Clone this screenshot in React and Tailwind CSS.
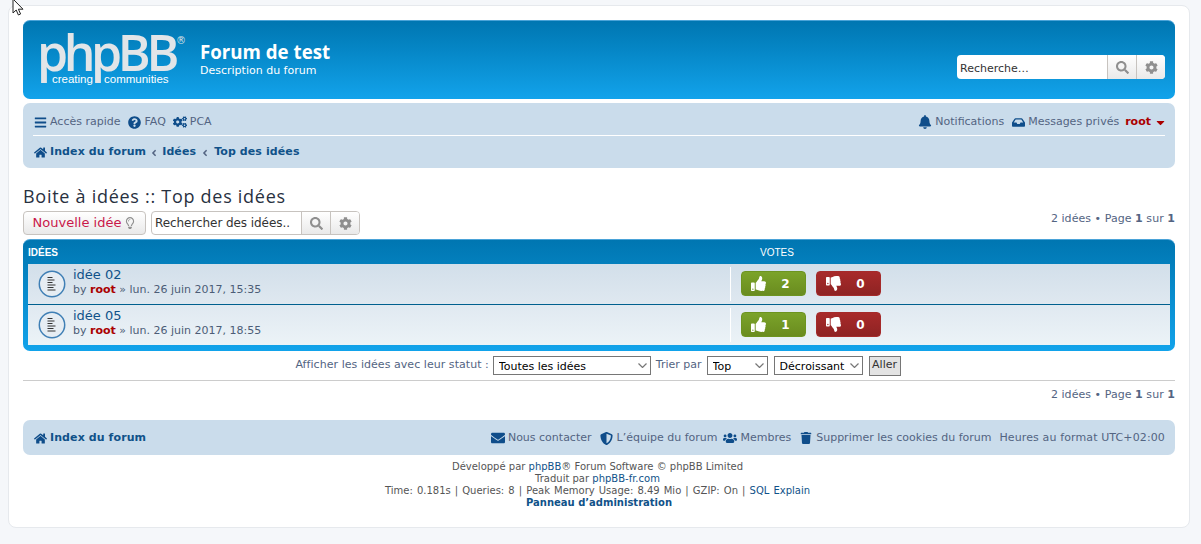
import {
  FaBars, FaQuestionCircle, FaCogs, FaHome, FaBell, FaInbox, FaEnvelope, FaShieldAlt,
  FaUsers, FaTrash, FaThumbsUp, FaThumbsDown, FaSearch, FaCog, FaCaretDown, FaAngleLeft,
} from "react-icons/fa";
import { FaRegLightbulb } from "react-icons/fa6";

const Logo = () => (
  <div className="relative h-[60px] w-[150px] shrink-0">
    <span className="absolute left-[-1px] top-[-3px] font-['Open_Sans'] text-[50px] font-semibold leading-[40px] tracking-[-4.4px] text-[#e2e5e8]">
      phpBB
    </span>
    <span className="absolute left-[138px] top-[1px] text-[10px] leading-none text-[#dfe3e6]">®</span>
    <span className="absolute left-[14px] top-[38px] font-['Liberation_Sans'] text-[11.5px] leading-[13px] text-white">creating</span>
    <span className="absolute left-[66px] top-[38px] font-['Liberation_Sans'] text-[11.5px] leading-[13px] text-white">communities</span>
  </div>
);

const SearchIcons = ({ width }) => (
  <>
    <span className={`flex ${width} items-center justify-center border-l border-[#c7c3bf] bg-gradient-to-b from-white to-[#e9e9e9] text-[#8f8f8f]`}>
      <FaSearch size={13} />
    </span>
    <span className={`flex ${width} items-center justify-center border-l border-[#c7c3bf] bg-gradient-to-b from-white to-[#e9e9e9] text-[#8f8f8f]`}>
      <FaCog size={13} />
    </span>
  </>
);

const NavLink = ({ icon, children, bold, className = "" }) => (
  <span className={`flex items-center gap-[3px] ${bold ? "font-bold tracking-[0.1px]" : ""} ${className}`}>
    <span className="flex w-[14px] justify-center text-[#0f4d8a]">{icon}</span>
    {children}
  </span>
);

const Pagination = () => (
  <span className="tracking-[0.05px] text-[#536482]">
    2 idées • Page <b>1</b> sur <b>1</b>
  </span>
);

const VoteButton = ({ up, count }) => (
  <span
    className={`flex h-[25px] w-[65px] items-center rounded-[4px] border pl-[9px] text-[12px] font-bold text-white ${
      up
        ? "border-[#6d9420] bg-gradient-to-b from-[#7ba32a] to-[#6a8c1f]"
        : "border-[#a52a2a] bg-gradient-to-b from-[#a82a2a] to-[#8e2323]"
    }`}
  >
    {up ? <FaThumbsUp size={15} /> : <FaThumbsDown size={15} />}
    <span className="ml-[15px] w-[9px] text-center">{count}</span>
  </span>
);

const TopicIcon = () => (
  <svg className="shrink-0" width="28" height="28" viewBox="0 0 28 28">
    <circle cx="14" cy="14" r="12.7" fill="#e6edf3" stroke="#3f7fb5" strokeWidth="1.5" />
    <path d="M9.5 7.5h5M9.5 10h7M9.5 12.5h5M9.5 15h8M9.5 17.5h6M9.5 20h8" stroke="#333" strokeWidth="1" />
  </svg>
);

const IdeaRow = ({ title, date, up, down, gradient }) => (
  <div className={`flex h-[40px] ${gradient}`}>
    <div className="flex w-[702px] shrink-0 items-center pl-[10px]">
      <TopicIcon />
      <div className="ml-[7px] mt-[-4px]">
        <div className="text-[13px] leading-[14px] text-[#105289]">{title}</div>
        <div className="mt-px leading-[13px] text-[#4c5d77]">
          by <b className="text-[#aa0000]">root</b> » {date}
        </div>
      </div>
    </div>
    <div className="my-[3px] border-l border-white" />
    <div className="flex items-center gap-[10px] pb-px pl-[10px]">
      <VoteButton up count={up} />
      <VoteButton count={down} />
    </div>
  </div>
);

const Field = ({ value, width }) => (
  <span className={`relative block h-[19px] ${width}`}>
    <select className="h-full w-full appearance-none border border-[#767676] bg-white pl-[5px] pt-[2px] text-[11px] text-black" defaultValue={value}>
      <option>{value}</option>
    </select>
    <svg className="pointer-events-none absolute right-[4px] top-[7px]" width="9" height="5" viewBox="0 0 9 5" fill="none" stroke="#777" strokeWidth="1.2">
      <path d="M.5.5l4 4 4-4" />
    </svg>
  </span>
);

export default function App() {
  return (
    <div className="relative min-h-screen bg-[#f5f7fa] pt-[5px] font-['DejaVu_Sans',sans-serif] text-[11px] text-[#536482]">
      {/* mouse pointer left in the capture */}
      <svg className="absolute left-[12px] top-[-1px]" width="13" height="17" viewBox="0 0 13 17">
        <path d="M1 0v14l3.2-3 2.2 5 2.2-1-2.2-4.8H11z" fill="#fff" stroke="#222" strokeWidth="1" />
      </svg>

      <div className="ml-[8px] h-[523px] w-[1182px] rounded-[8px] border border-[#e6e9ed] bg-white px-[14px] pt-[14px]">
        {/* Header */}
        <div className="flex h-[79px] items-start rounded-[7px] border-t border-[#4aa3d8] bg-gradient-to-b from-[#0076b1] to-[#12a3eb] pl-[15px] pr-[10px]">
          <div className="mt-[14px]">
            <Logo />
          </div>
          <div className="ml-[12px] mt-[21px] text-white">
            <div className="font-['Open_Sans'] text-[18.7px] font-bold leading-[20px]">Forum de test</div>
            <div className="mt-[2px] leading-[13px]">Description du forum</div>
          </div>
          <div className="ml-auto mt-[34px] flex h-[24px] w-[208px] overflow-hidden rounded-[4px] bg-white">
            <span className="flex-1 pl-[3px] leading-[27px] text-[#333]">Recherche…</span>
            <SearchIcons width="w-[29px]" />
          </div>
        </div>

        {/* Navbar */}
        <div className="mt-[4px] h-[65px] rounded-[7px] bg-[#cadceb] px-[10px]">
          <div className="flex h-[33px] items-center border-b border-white pt-[6px]">
            <div className="flex items-center gap-[7px]">
              <NavLink icon={<FaBars size={13} />}>Accès rapide</NavLink>
              <NavLink icon={<FaQuestionCircle size={13} />}>FAQ</NavLink>
              <NavLink icon={<FaCogs size={16} />}>PCA</NavLink>
            </div>
            <div className="ml-auto flex items-center gap-[8px]">
              <NavLink className="mr-[-1px]" icon={<FaBell size={14} />}>Notifications</NavLink>
              <NavLink icon={<FaInbox size={13} />}>Messages privés</NavLink>
              <b className="ml-[-2px] text-[#aa0000]">root</b>
              <FaCaretDown size={13} className="ml-[-5px] mr-[-2px] text-[#aa0000]" />
            </div>
          </div>
          <div className="flex h-[32px] items-center pt-[1px] text-[#105289]">
            <NavLink bold icon={<FaHome size={13} />}>Index du forum</NavLink>
            <FaAngleLeft size={10} className="mx-[3px] text-[#536482]" />
            <b className="tracking-[0.1px]">Idées</b>
            <FaAngleLeft size={10} className="mx-[4px] text-[#536482]" />
            <b className="tracking-[0.1px]">Top des idées</b>
          </div>
        </div>

        {/* Title */}
        <h2 className="mt-[16px] font-['Open_Sans'] text-[18px] leading-[24px] tracking-[0.72px] text-[#28313f]">Boite à idées :: Top des idées</h2>

        {/* Action bar */}
        <div className="mt-[3px] flex h-[24px] items-start">
          <span className="flex h-[24px] w-[123px] items-center justify-center gap-[3px] rounded-[4px] border border-[#c7c3bf] bg-gradient-to-b from-white to-[#e9e9e9] text-[13px] text-[#c9174a]">
            Nouvelle idée <FaRegLightbulb size={12} className="text-[#8f8f8f]" />
          </span>
          <div className="ml-[5px] flex h-[24px] w-[209px] overflow-hidden rounded-[4px] border border-[#c7c3bf] bg-white">
            <span className="flex-1 pl-[3px] text-[12px] leading-[22px] tracking-[-0.07px] text-[#333]">Rechercher des idées..</span>
            <SearchIcons width="w-[29px]" />
          </div>
          <div className="ml-auto mt-[1px] leading-[13px]">
            <Pagination />
          </div>
        </div>

        {/* Ideas table */}
        <div className="mt-[4px] h-[112px] rounded-[7px] border-t border-[#4aa3d8] bg-gradient-to-b from-[#0076b1] to-[#12a3eb] px-[5px]">
          <div className="flex h-[24px] items-center font-['Liberation_Sans'] text-[10px] text-white">
            <b className="w-[732px] font-bold">IDÉES</b>
            <span>VOTES</span>
          </div>
          <IdeaRow title="idée 02" date="lun. 26 juin 2017, 15:35" up={2} down={0} gradient="bg-gradient-to-b from-[#d2dfea] to-[#dfe8f0]" />
          <div className="h-px bg-[#00608f]" />
          <IdeaRow title="idée 05" date="lun. 26 juin 2017, 18:55" up={1} down={0} gradient="bg-gradient-to-b from-[#e0e9f1] to-[#ecf3f7]" />
        </div>

        {/* Sort form */}
        <div className="mt-[4px] flex h-[21px] items-center justify-center pr-[2px] text-[#536482]">
          <span className="mb-px mr-[4px] tracking-[0.05px]">Afficher les idées avec leur statut :</span>
          <Field value="Toutes les idées" width="w-[158px]" />
          <span className="mb-px ml-[5px] mr-[5px]">Trier par</span>
          <Field value="Top" width="w-[61px]" />
          <span className="w-[6px]" />
          <Field value="Décroissant" width="w-[89px]" />
          <span className="ml-[6px] flex h-[20px] w-[32px] items-center justify-center border border-[#767676] bg-[#e3e3e3] text-[#333]">Aller</span>
        </div>
        <div className="mt-[4px] h-px bg-[#cccccc]" />
        <div className="mt-[7px] flex h-[13px] justify-end leading-[13px]">
          <Pagination />
        </div>

        {/* Footer nav */}
        <div className="mt-[19px] flex h-[35px] items-center rounded-[7px] bg-[#cadceb] px-[10px] pt-[1px]">
          <span className="text-[#105289]">
            <NavLink bold icon={<FaHome size={13} />}>Index du forum</NavLink>
          </span>
          <div className="ml-auto flex items-center gap-[7px]">
            <NavLink className="mr-[1px]" icon={<FaEnvelope size={14} />}>Nous contacter</NavLink>
            <NavLink className="mr-[-1px]" icon={<FaShieldAlt size={13} />}>L’équipe du forum</NavLink>
            <NavLink className="mr-[1px]" icon={<FaUsers size={16} />}>Membres</NavLink>
            <NavLink className="mr-[1px]" icon={<FaTrash size={12} />}>Supprimer les cookies du forum</NavLink>
            <span className="tracking-[0.12px]">Heures au format UTC+02:00</span>
          </div>
        </div>

        {/* Copyright */}
        <div className="mt-[6px] pr-[3px] text-center text-[10px] leading-[12px] text-[#555555]">
          <div>Développé par <span className="text-[#105289]">phpBB</span>® Forum Software © phpBB Limited</div>
          <div>Traduit par <span className="text-[#105289]">phpBB-fr.com</span></div>
          <div className="[word-spacing:0.9px]">Time: 0.181s | Queries: 8 | Peak Memory Usage: 8.49 Mio | GZIP: On | <span className="text-[#105289]">SQL Explain</span></div>
          <b className="ml-[3px] text-[#105289]">Panneau d’administration</b>
        </div>
      </div>
    </div>
  );
}
